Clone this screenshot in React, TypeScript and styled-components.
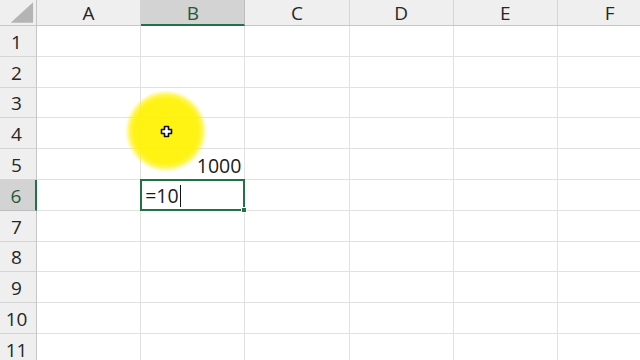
import styled, { createGlobalStyle } from "styled-components";

const GlobalStyle = createGlobalStyle`
    html, body {
        margin: 0;
        padding: 0;
        background: #ffffff;
        overflow: hidden;
    }
    body {
        font-family: "Open Sans", "Noto Sans", sans-serif;
    }
`;

const columns = ['A', 'B', 'C', 'D', 'E', 'F'];
const rows = [1, 2, 3, 4, 5, 6, 7, 8, 9, 10, 11];

export default function App() {
    return (
        <>
            <GlobalStyle/>
            <Sheet>
                <Grid>
                    <Corner>
                        <svg width="37" height="26" viewBox="0 0 37 26">
                            <polygon points="11,23 34,2 34,23" fill="#b4b4b4"/>
                        </svg>
                    </Corner>
                    {columns.map(c => <ColHeader key={c} active={c === 'B'}>{c}</ColHeader>)}
                    {rows.map(r => (
                        <Row key={r}>
                            <RowHeader active={r === 6}>{r}</RowHeader>
                            {columns.map(c => {
                                if (c === 'B' && r === 5) return <Cell key={c} align="right">1000</Cell>;
                                if (c === 'B' && r === 6) return (
                                    <SelectedCell key={c}>
                                        =10<Caret/>
                                        <FillHandle/>
                                    </SelectedCell>
                                );
                                return <Cell key={c}/>;
                            })}
                        </Row>
                    ))}
                </Grid>
                <Highlight/>
                <Pointer>
                    <svg width="13" height="13" viewBox="0 0 13 13">
                        <path d="M4.5 1.5h4v3h3v4h-3v3h-4v-3h-3v-4h3z" fill="#ffffff" stroke="#111" strokeWidth="1.6" strokeLinejoin="round"/>
                    </svg>
                </Pointer>
            </Sheet>
        </>
    );
}

const Sheet = styled.div`
    position: relative;
    width: 640px;
    height: 360px;
    overflow: hidden;
`

const Grid = styled.div`
    display: grid;
    grid-template-columns: 37px repeat(6, 104.2px);
    grid-template-rows: 26px repeat(11, 30.8px);
    width: 662px;
`

const Row = styled.div`
    display: contents;
`

const Corner = styled.div`
    background-color: #efefef;
    border-right: 1px solid #c6c6c6;
    border-bottom: 1px solid #c6c6c6;
    box-sizing: border-box;
    display: flex;
`

const ColHeader = styled.div<{active?: boolean}>`
    align-items: center;
    background-color: ${props => props.active ? '#d3d3d3' : '#efefef'};
    border-right: 1px solid ${props => props.active ? '#bdbdbd' : '#d4d4d4'};
    border-bottom: ${props => props.active ? '2px solid #217346' : '1px solid #c6c6c6'};
    box-sizing: border-box;
    color: ${props => props.active ? '#1f5a3a' : '#262626'};
    display: flex;
    font-size: 19px;
    justify-content: center;
    padding-top: 1px;
`

const RowHeader = styled.div<{active?: boolean}>`
    align-items: center;
    background-color: ${props => props.active ? '#d3d3d3' : '#efefef'};
    border-right: ${props => props.active ? '2px solid #217346' : '1px solid #c6c6c6'};
    border-bottom: 1px solid ${props => props.active ? '#bdbdbd' : '#d4d4d4'};
    box-sizing: border-box;
    color: ${props => props.active ? '#1f5a3a' : '#262626'};
    display: flex;
    font-size: 19px;
    justify-content: center;
    padding: 2px 3px 0 0;
`

const Cell = styled.div<{align?: string}>`
    align-items: flex-end;
    border-right: 1px solid #e1e1e1;
    border-bottom: 1px solid #e1e1e1;
    box-sizing: border-box;
    color: #1b1b1b;
    display: flex;
    font-size: 19.5px;
    justify-content: ${props => props.align === 'right' ? 'flex-end' : 'flex-start'};
    line-height: 26px;
    padding: 0 3px 0 4px;
`

const SelectedCell = styled.div`
    align-items: flex-end;
    border: 2px solid #217346;
    box-sizing: border-box;
    color: #1b1b1b;
    display: flex;
    font-size: 19.5px;
    line-height: 26px;
    margin: -1px 0 0 -1px;
    padding: 0 3px 0 3px;
    position: relative;
`

const Caret = styled.span`
    background-color: #111;
    display: inline-block;
    height: 22px;
    margin: 0 0 2px 1px;
    width: 1px;
`

const FillHandle = styled.span`
    background-color: #217346;
    border: 1px solid #ffffff;
    bottom: -4px;
    height: 4px;
    position: absolute;
    right: -4px;
    width: 4px;
`

const Highlight = styled.div`
    background: radial-gradient(circle, #fff200 0, #fff200 32px, rgba(255, 242, 0, 0.75) 36px, rgba(255, 242, 0, 0) 41px);
    border-radius: 50%;
    height: 82px;
    left: 125px;
    opacity: 0.92;
    pointer-events: none;
    position: absolute;
    top: 90px;
    width: 82px;
`

const Pointer = styled.div`
    display: flex;
    left: 160px;
    position: absolute;
    top: 125px;
`
